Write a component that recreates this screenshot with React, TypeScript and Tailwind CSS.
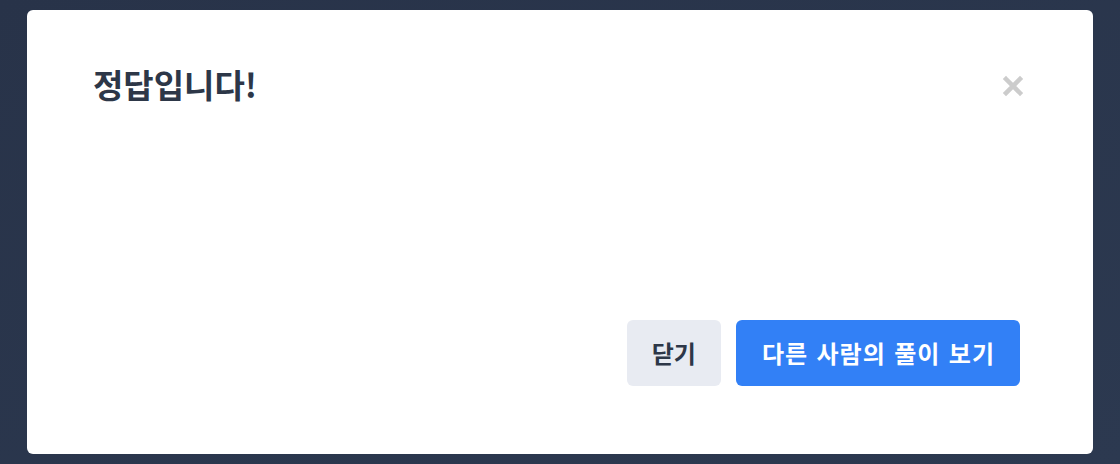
export default function App() {
  return (
    <div
      className="w-[1120px] h-[464px] bg-gradient-to-br from-[#283349] to-[#2c3950] pt-[10px] pl-[27px]"
      style={{ fontFamily: '"Noto Sans CJK KR", "Noto Sans", sans-serif' }}
    >
      <div className="w-[1066px] h-[444px] bg-white rounded-[6px] flex flex-col justify-between pl-[66px] pr-[73px] pt-[52px] pb-[68px]">
        <div className="flex items-start justify-between">
          <h1 className="text-[33px] leading-[44px] font-bold text-[#2d3748]">정답입니다!</h1>
          <button className="mt-[13px] mr-[-4px] text-[#cccccc]" aria-label="닫기">
            <svg width="22" height="22" viewBox="0 0 22 22">
              <path d="M4 4 L18 18 M18 4 L4 18" stroke="currentColor" strokeWidth="4.5" strokeLinecap="square" />
            </svg>
          </button>
        </div>
        <div className="flex justify-end gap-[15px]">
          <button className="h-[66px] px-[25px] rounded-[6px] bg-[#e8ebf2] text-[#2d3748] text-[24px] font-bold">
            닫기
          </button>
          <button className="h-[66px] pl-[26px] pr-[25px] rounded-[6px] bg-[#3280f6] text-white text-[24px] font-bold tracking-[1px] [word-spacing:2px]">
            다른 사람의 풀이 보기
          </button>
        </div>
      </div>
    </div>
  );
}
